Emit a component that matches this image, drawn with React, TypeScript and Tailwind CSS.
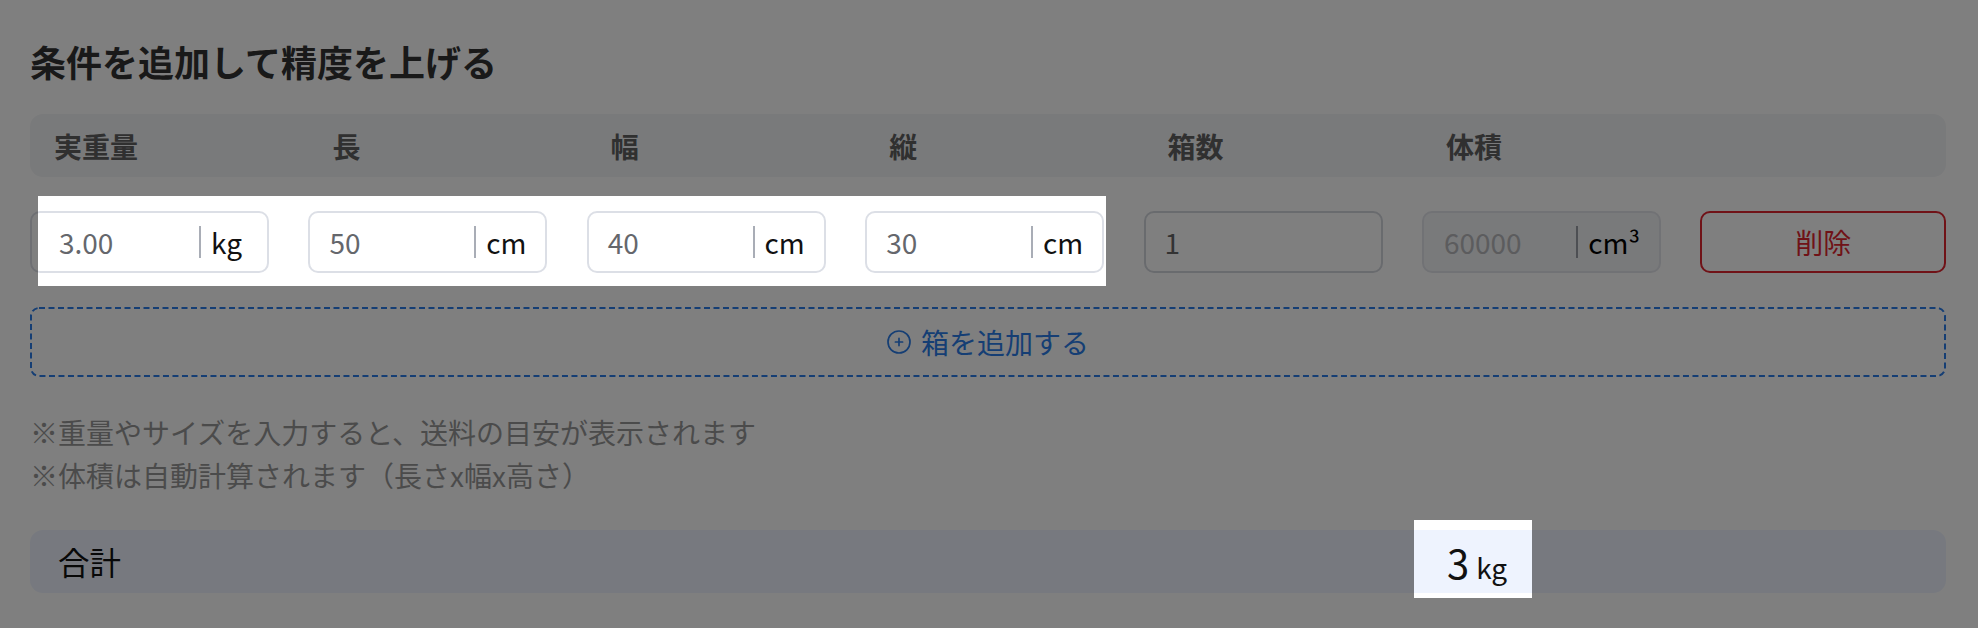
import React from "react";

const gridCols = "grid grid-cols-[repeat(6,239px)_1fr] gap-x-[39.4px]";

function UnitInput({
  value,
  unit,
  first,
}: {
  value: string;
  unit: React.ReactNode;
  first?: boolean;
}) {
  return (
    <div
      className={`flex h-[62px] items-center rounded-[10px] border-2 border-[#dcdfe6] bg-white ${
        first ? "pl-[27px] pr-[25px]" : "pl-[19px] pr-[19px]"
      }`}
    >
      <span className="flex-1 text-[28px] leading-none text-[#65676c]">{value}</span>
      <span className="h-[32px] border-l-2 border-[#a9adb6] pl-[10px] text-[28px] leading-[32px] text-[#111]">
        {unit}
      </span>
    </div>
  );
}

export default function App() {
  return (
    <div className="relative h-[628px] w-[1978px] overflow-hidden bg-white font-['Noto_Sans_CJK_JP',sans-serif]">
      <div className="ml-[30px] w-[1916px] pt-[42.5px]">
        <h2 className="text-[36px] font-bold leading-none text-[#333]">
          条件を追加して精度を上げる
        </h2>

        {/* header */}
        <div className={`${gridCols} mt-[35.5px] h-[63px] items-center rounded-[13px] bg-[#f3f4f6]`}>
          {["実重量", "長", "幅", "縦", "箱数", "体積"].map((l) => (
            <div key={l} className="pl-[24px] text-[28px] font-bold leading-none text-[#606060]">
              {l}
            </div>
          ))}
          <div />
        </div>

        {/* row */}
        <div className={`${gridCols} mt-[34px]`}>
          <UnitInput value="3.00" unit="kg" first />
          <UnitInput value="50" unit="cm" />
          <UnitInput value="40" unit="cm" />
          <UnitInput value="30" unit="cm" />
          <div className="flex h-[62px] items-center rounded-[10px] border-2 border-[#d3d6dd] bg-white pl-[19px]">
            <span className="text-[28px] leading-none text-[#666]">1</span>
          </div>
          <div className="flex h-[62px] items-center rounded-[10px] border-2 border-[#e3e5eb] bg-[#f3f4f7] pl-[20px] pr-[19px]">
            <span className="flex-1 text-[28px] leading-none text-[#b8b9bc]">60000</span>
            <span className="h-[32px] border-l-2 border-[#9a9ea6] pl-[10px] text-[28px] leading-[32px] text-black">
              cm³
            </span>
          </div>
          <button className="flex h-[62px] items-center justify-center rounded-[10px] border-2 border-[#e0242f] bg-white text-[28px] leading-none text-[#e0242f]">
            削除
          </button>
        </div>

        {/* add box */}
        <div className="relative mt-[34px] flex h-[70px] items-center justify-center gap-[10px] text-[#2b7de9]">
          <svg
            className="pointer-events-none absolute inset-0"
            width="1916"
            height="70"
            viewBox="0 0 1916 70"
          >
            <rect
              x="1"
              y="1"
              width="1914"
              height="68"
              rx="8"
              fill="none"
              stroke="#2b7de9"
              strokeWidth="2"
              strokeDasharray="6 3.5"
            />
          </svg>
          <svg width="24" height="24" viewBox="0 0 24 24" fill="none" stroke="currentColor" strokeWidth="1.7">
            <circle cx="12" cy="12" r="11" />
            <path d="M8.4 12h7.2M12 8.4v7.2" strokeLinecap="round" />
          </svg>
          <span className="text-[28px] leading-none">箱を追加する</span>
        </div>

        {/* notes */}
        <div className="mt-[33.5px] text-[28px] leading-[43px] text-[#979797]">
          <p>※重量やサイズを入力すると、送料の目安が表示されます</p>
          <p>※体積は自動計算されます（長さx幅x高さ）</p>
        </div>

        {/* total */}
        <div className={`${gridCols} mt-[33.5px] h-[63px] items-center rounded-[13px] bg-[#eef3fe]`}>
          <div className="pl-[28px] text-[31.5px] leading-none text-[#111]">合計</div>
          <div />
          <div />
          <div />
          <div />
          <div className="flex items-baseline pl-[25px] text-[#111]">
            <span className="text-[40px] leading-none">3</span>
            <span className="ml-[7px] text-[28px] leading-none">kg</span>
          </div>
          <div />
        </div>
      </div>

      {/* tutorial overlay with spotlights */}
      <svg
        className="pointer-events-none absolute left-0 top-0"
        width="1978"
        height="628"
        viewBox="0 0 1978 628"
      >
        <path
          fillRule="evenodd"
          fill="#000"
          fillOpacity="0.5"
          d="M0 0H1978V628H0Z M38 196V286H1106V196Z M1414 520V598H1532V520Z"
        />
      </svg>
    </div>
  );
}
